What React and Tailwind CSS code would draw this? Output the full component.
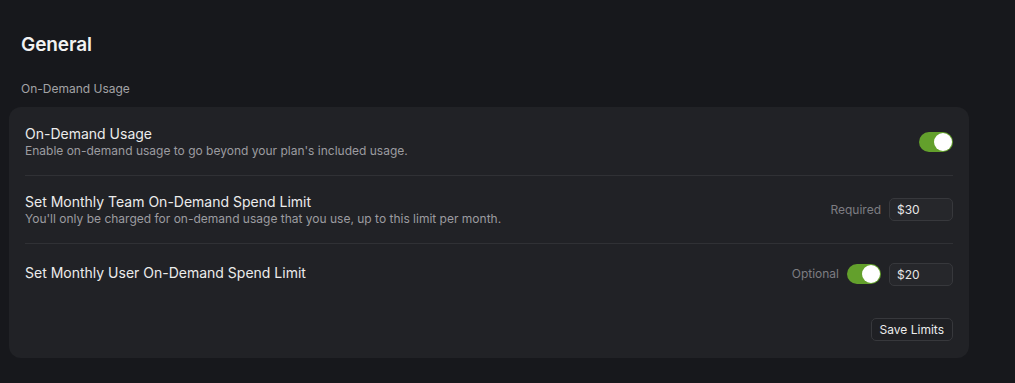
import React, { useState } from 'react';

const Toggle = ({ on, onChange }) => (
  <button
    onClick={() => onChange(!on)}
    className={`w-[34px] h-[20px] rounded-full p-[1px] flex items-center transition-colors ${on ? 'bg-[#63a02c] justify-end' : 'bg-[#3a3b40] justify-start'}`}
  >
    <span className="w-[18px] h-[18px] rounded-full bg-white block" />
  </button>
);

const MoneyInput = ({ value, onChange }) => (
  <input
    value={value}
    onChange={e => onChange(e.target.value)}
    className="w-[64px] h-[23px] px-[7px] rounded-[5px] bg-[#26272b] border border-[#37383c] text-[12px] text-[#e6e6e6] outline-none"
  />
);

const App = () => {
  const [onDemand, setOnDemand] = useState(true);
  const [userLimitOn, setUserLimitOn] = useState(true);
  const [teamLimit, setTeamLimit] = useState('$30');
  const [userLimit, setUserLimit] = useState('$20');

  return (
    <div className="w-[1015px] h-[383px] bg-[#17181c] overflow-hidden" style={{ fontFamily: 'Inter, "Noto Sans", sans-serif' }}>
      <div className="pl-[9px] pr-[46px] pt-[33px]">
        <h1 className="pl-[12px] text-[19px] leading-[24px] font-semibold text-[#f2f2f2] tracking-[-0.1px]">General</h1>
        <div className="pl-[12px] mt-[24px] text-[12px] leading-[16px] text-[#a3a3a6]">On-Demand Usage</div>

        {/* card */}
        <div className="mt-[10px] bg-[#212226] rounded-[12px] px-[16px]">
          <div className="h-[69px] pt-[1px] flex items-center justify-between border-b border-[#303135]">
            <div>
              <div className="text-[14px] leading-[17px] text-[#ececec]">On-Demand Usage</div>
              <div className="text-[12px] leading-[15px] text-[#9c9ca0] mt-[1px]">Enable on-demand usage to go beyond your plan's included usage.</div>
            </div>
            <Toggle on={onDemand} onChange={setOnDemand} />
          </div>

          <div className="h-[68px] flex items-center justify-between border-b border-[#303135]">
            <div>
              <div className="text-[14px] leading-[17px] text-[#ececec]">Set Monthly Team On-Demand Spend Limit</div>
              <div className="text-[12px] leading-[15px] text-[#9c9ca0] mt-[1px]">You'll only be charged for on-demand usage that you use, up to this limit per month.</div>
            </div>
            <div className="flex items-center gap-[8px]">
              <span className="text-[12px] text-[#7d7d82]">Required</span>
              <MoneyInput value={teamLimit} onChange={setTeamLimit} />
            </div>
          </div>

          <div className="h-[60px] flex items-center justify-between">
            <div className="text-[14px] leading-[17px] text-[#ececec] -mt-[4px]">Set Monthly User On-Demand Spend Limit</div>
            <div className="flex items-center gap-[8px]">
              <span className="text-[12px] text-[#7d7d82]">Optional</span>
              <Toggle on={userLimitOn} onChange={setUserLimitOn} />
              <MoneyInput value={userLimit} onChange={setUserLimit} />
            </div>
          </div>

          <div className="flex justify-end pt-[14px] pb-[17px]">
            <button className="h-[23px] px-[8px] rounded-[5px] border border-[#37383c] bg-[#1f2024] text-[12px] text-[#ececec]">Save Limits</button>
          </div>
        </div>
      </div>
    </div>
  );
};

export default App;
